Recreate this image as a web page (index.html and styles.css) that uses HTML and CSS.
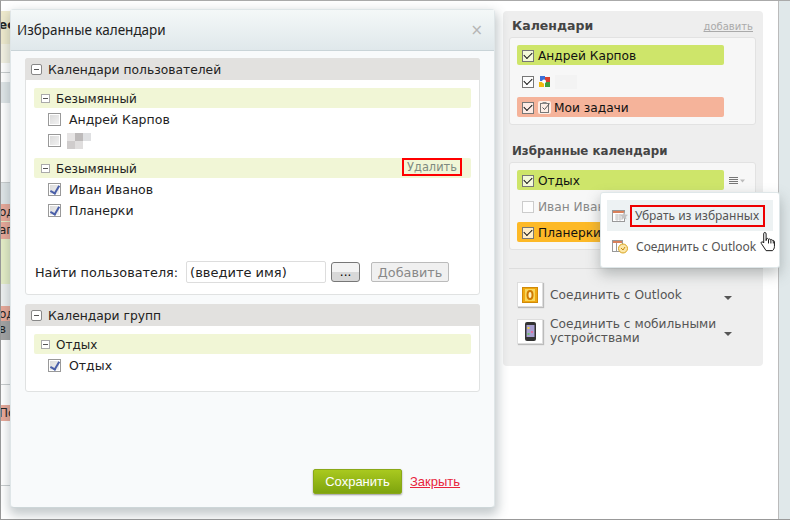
FILE: index.html
```html
<!DOCTYPE html>
<html lang="ru">
<head>
  <meta charset="UTF-8" />
  <title>Избранные календари</title>
  <link rel="stylesheet" href="styles.css">
</head>
<body>
<div class="screen">

  <!-- calendar grid behind the dialog, only its left edge is visible -->
  <div class="grid">
    <div class="strip h10"></div>
    <div class="strip cream h33"><b>ес</b></div>
    <div class="strip cream-light h19"></div>
    <div class="strip h10 line"></div>
    <div class="strip h9"></div>
    <div class="strip gray h21"></div>
    <div class="strip h80 line"></div>
    <div class="strip gray h21"></div>
    <div class="strip red h17">од</div>
    <div class="strip green h1"></div>
    <div class="strip red h17">ап</div>
    <div class="strip green h45"></div>
    <div class="strip gray-light h22"></div>
    <div class="strip red h15">од</div>
    <div class="strip dark h19">в с</div>
    <div class="strip h45 line"></div>
    <div class="strip h20"></div>
    <div class="strip red h16">По</div>
    <div class="strip h64 line"></div>
  </div>

  <aside class="side">
    <div class="side-head">
      <h3>Календари</h3>
      <a class="side-add">добавить</a>
    </div>
    <div class="side-box">
      <div class="cal cal-green"><span class="tick on"></span>Андрей Карпов</div>
      <div class="cal">
        <span class="tick on"></span>
        <svg class="gicon" width="12" height="12" viewBox="0 0 12 12">
          <rect x="1" y="0" width="5" height="5" fill="#3b6fd6"/>
          <rect x="6" y="1" width="5" height="5" fill="#d8402f"/>
          <rect x="0" y="6" width="5" height="5" fill="#f3b90f"/>
          <rect x="6" y="6" width="5" height="5" fill="#3f9e3d"/>
          <circle cx="5" cy="5.500" r="2" fill="#fff"/>
        </svg>
        <span class="blur-name"></span>
      </div>
      <div class="cal cal-pink">
        <span class="tick on"></span>
        <span class="task-ico">
          <svg width="13" height="13" viewBox="0 0 13 13" fill="none" stroke="#777">
            <rect x="2.500" y="2.500" width="8" height="9"/>
            <rect x="4.500" y="1" width="4" height="2" fill="#888" stroke="none"/>
            <path d="M4.500 6.500l2 2 5-6" stroke="#555"/>
          </svg>
        </span>Мои задачи
      </div>
    </div>

    <h3 class="side-title2">Избранные календари</h3>
    <div class="side-box">
      <div class="fav-row">
        <div class="cal cal-green"><span class="tick on"></span>Отдых</div>
        <span class="menu-ico">
          <svg width="17" height="7" viewBox="0 0 17 7">
            <path d="M0 .5h9M0 2.500h9M0 4.500h9M0 6.500h9" stroke="#777"/>
            <path d="M11 2.500h5l-2.500 3z" fill="#bbb"/>
          </svg>
        </span>
      </div>
      <div class="cal cal-off"><span class="tick"></span>Иван Иванов</div>
      <div class="cal cal-orange"><span class="tick on"></span>Планерки</div>
    </div>

    <div class="side-links">
      <div class="sync">
        <span class="sync-ico">
          <svg width="16" height="16" viewBox="0 0 16 16">
            <rect x=".5" y=".5" width="15" height="15" fill="#f0a810" stroke="#d08a08"/>
            <rect x="3" y="2" width="10" height="12" fill="#f8d65a"/>
            <ellipse cx="8" cy="8" rx="2.500" ry="4" fill="#fff3c0" stroke="#d07a00" stroke-width="2"/>
          </svg>
        </span>
        <span class="sync-text">Соединить с Outlook</span>
        <span class="arrow"></span>
      </div>
      <div class="sync">
        <span class="sync-ico">
          <svg width="11" height="19" viewBox="0 0 11 19">
            <rect x="0" y="0" width="11" height="19" rx="2" fill="#333"/>
            <rect x="1.500" y="3" width="8" height="12" fill="#a8a0d0"/>
            <rect x="2.500" y="5" width="2" height="2" fill="#f0d040"/>
            <rect x="6" y="9" width="2" height="2" fill="#e070a0"/>
            <rect x="2.500" y="11" width="2" height="2" fill="#70c070"/>
          </svg>
        </span>
        <span class="sync-text">Соединить с мобильными устройствами</span>
        <span class="arrow"></span>
      </div>
    </div>
  </aside>

  <div class="rail"></div>

  <!-- dialog -->
  <section class="dialog">
    <header class="dialog-head">
      <h2>Избранные календари</h2>
      <span class="close">×</span>
    </header>
    <div class="dialog-body">

      <div class="panel panel-users">
        <div class="panel-head"><span class="toggle big"></span>Календари пользователей</div>
        <div class="panel-body">
          <div class="group"><span class="toggle"></span>Безымянный</div>
          <div class="item"><span class="check"></span>Андрей Карпов</div>
          <div class="item">
            <span class="check"></span>
            <svg class="pixels" width="24" height="16" viewBox="0 0 24 16">
              <rect x="0" y="0" width="8" height="8" fill="#e6e4e4"/>
              <rect x="8" y="0" width="8" height="8" fill="#bdbaba"/>
              <rect x="16" y="0" width="8" height="8" fill="#dfe0e2"/>
              <rect x="0" y="8" width="8" height="8" fill="#cfcccc"/>
              <rect x="8" y="8" width="8" height="8" fill="#e0dede"/>
            </svg>
          </div>
          <div class="group group-next"><span class="toggle"></span>Безымянный<a class="remove">Удалить</a></div>
          <div class="item"><span class="check checked"></span>Иван Иванов</div>
          <div class="item"><span class="check checked"></span>Планерки</div>
          <div class="find">
            <label>Найти пользователя:</label>
            <input class="find-input" type="text" value="(введите имя)">
            <button class="btn-dots">...</button>
            <button class="btn-add">Добавить</button>
          </div>
        </div>
      </div>

      <div class="panel panel-groups">
        <div class="panel-head"><span class="toggle big"></span>Календари групп</div>
        <div class="panel-body">
          <div class="group"><span class="toggle"></span>Отдых</div>
          <div class="item"><span class="check checked"></span>Отдых</div>
        </div>
      </div>

      <div class="dialog-foot">
        <button class="btn-save">Сохранить</button>
        <a class="close-link">Закрыть</a>
      </div>
    </div>
  </section>

  <!-- popup menu -->
  <div class="popup">
    <div class="popup-item active">
      <svg width="16" height="14" viewBox="0 0 16 14">
        <rect x=".5" y="1.500" width="12" height="11" fill="#fff" stroke="#999"/>
        <rect x="1" y="2" width="11" height="2" fill="#d9805a"/>
        <path d="M3 6h8M3 8h8M3 10h8M5 5v7M8 5v7" stroke="#ccc"/>
        <path d="M12 3l1.200 2.500 2.800.3-2 2 .5 2.700-2.500-1.300-2.500 1.300.5-2.700-2-2 2.800-.3z" fill="#c4c4c4"/>
      </svg>
      <span class="popup-label">Убрать из избранных</span>
    </div>
    <div class="popup-item">
      <svg width="16" height="15" viewBox="0 0 16 15">
        <rect x=".5" y="1.500" width="10" height="11" fill="#fff" stroke="#999"/>
        <rect x="1" y="2" width="9" height="2" fill="#d9805a"/>
        <path d="M4.500 4v8" stroke="#999"/>
        <circle cx="11" cy="9.500" r="4.500" fill="#fbe6a8" stroke="#d9a520"/>
        <path d="M9 9l2 2 2-3" fill="none" stroke="#c58a10"/>
      </svg>
      <span>Соединить с Outlook</span>
    </div>
    <svg class="hand" width="19" height="23" viewBox="0 0 18 24">
      <path d="M5 1.500c1 0 1.500.6 1.500 1.500v7l.5-2c1-.6 2 0 2 .8.600-.8 2-.6 2.200.4.800-.6 2-.2 2.200.8.800-.3 1.800 0 1.800 1.200v5c0 2-1 3.300-2 4.300H6.500L1.500 13c-.8-1 .5-2.300 1.600-1.500l.9 1V3c0-1 .4-1.500 1-1.500z" fill="#fff" stroke="#111"/>
      <path d="M9 9v4M11.500 9.500V13M14 10.500V13" stroke="#111" fill="none"/>
    </svg>
  </div>

</div>
</body>
</html>
```

FILE: styles.css
```css
* { box-sizing: border-box; }
html, body { margin: 0; padding: 0; }
body {
  width: 790px;
  height: 520px;
  overflow: hidden;
  background: #fff;
  font-family: "DejaVu Sans", sans-serif;
  font-size: 12px;
  color: #222;
}
.screen {
  position: relative;
  display: flex;
  height: 520px;
  border-top: 1px solid #aaa;
  border-left: 1px solid #999;
  border-bottom: 1px solid #999;
}
h2, h3 { margin: 0; font-weight: normal; }
a { cursor: pointer; }

/* background calendar, does not go past the dialog */
.grid { width: 502px; flex: none; overflow: hidden; }
.strip { width: 200px; font-size: 12px; line-height: 16px; text-indent: -2px; overflow: hidden; white-space: nowrap; }
.line { border-bottom: 1px solid #c9cdce; }
.cream { background: #efeacd; padding-top: 6px; }
.cream-light { background: #f3f1e2; }
.gray { background: #dfe5e7; }
.gray-light { background: #edf0f0; }
.green { background: #e4edc6; }
.red { background: #e8a898; }
.dark { background: #a3a3a3; }
.h1 { height: 1px; }
.h9 { height: 9px; }
.h10 { height: 10px; }
.h15 { height: 15px; }
.h16 { height: 16px; }
.h17 { height: 17px; }
.h19 { height: 19px; }
.h20 { height: 20px; }
.h21 { height: 21px; }
.h22 { height: 22px; }
.h33 { height: 33px; }
.h45 { height: 45px; }
.h64 { height: 65px; }
.h80 { height: 80px; }

/* sidebar */
.side {
  width: 260px;
  height: 355px;
  margin-top: 10px;
  padding: 7px 7px 0 6px;
  background: #eee;
  border-radius: 4px;
  flex: none;
}
.side h3 { font-size: 12.500px; font-weight: bold; color: #444; }
.side-head { display: flex; justify-content: space-between; align-items: baseline; padding: 0 3px; height: 15px; }
.side-add { font-size: 10px; color: #aaa; text-decoration: underline; }
.side-box {
  margin-top: 4px;
  margin-bottom: 18px;
  height: 88px;
  padding: 7px;
  background: #f7f7f7;
  border: 1px solid #e2e2e2;
  border-radius: 3px;
}
.side h3.side-title2 { padding-left: 3px; height: 15px; line-height: 17px; font-size: 11.800px; }
.cal {
  display: flex;
  align-items: center;
  width: 207px;
  height: 20px;
  margin-bottom: 6px;
  padding: 1px 0 0 5px;
  border-radius: 2px;
  font-size: 12.200px;
  color: #111;
}
.cal-green { background: #cee56a; }
.cal-pink { background: #f5b39a; }
.cal-orange { background: #fdb927; }
.cal-off { color: #888; }
.tick {
  position: relative;
  width: 12px;
  height: 12px;
  margin-right: 4px;
  background: rgba(255, 255, 255, .75);
  border: 1px solid #ccc;
  flex: none;
}
.tick.on { border-color: #777; }
.tick.on::after {
  content: "";
  position: absolute;
  left: 1px;
  top: 1px;
  width: 7px;
  height: 4px;
  border-left: 1.500px solid #111;
  border-bottom: 1.500px solid #111;
  transform: rotate(-45deg);
}
.gicon { margin-left: 1px; }
.blur-name { width: 22px; height: 14px; margin-left: 4px; background: #f3f3f3; }
.task-ico { width: 13px; height: 13px; margin-right: 3px; background: #fdeee6; border-radius: 2px; display: flex; }
.fav-row { display: flex; align-items: flex-start; }
.menu-ico { margin: 7px 0 0 5px; display: flex; }

.side-links { border-top: 1px solid #ddd; margin-right: -7px; padding: 13px 8px 0; }
.sync { display: flex; align-items: center; margin-bottom: 10px; font-size: 12.200px; line-height: 14px; color: #555; }
.sync-ico {
  display: flex;
  align-items: center;
  justify-content: center;
  width: 26px;
  height: 25px;
  margin-right: 7px;
  background: #fff;
  border: 1px solid #ddd;
  box-shadow: 1px 1px 1px #bbb;
  flex: none;
}
.sync-text { width: 174px; }
.arrow {
  margin-top: 6px;
  width: 0;
  height: 0;
  border-left: 4px solid transparent;
  border-right: 4px solid transparent;
  border-top: 4px solid #555;
}

.rail { flex: 1; margin-left: 15px; background: #e0e8ea; border-left: 1px solid #bbb; }

/* dialog */
.dialog {
  position: absolute;
  left: 9px;
  top: 8px;
  width: 485px;
  height: 499px;
  background: #f8fafb;
  border: 1px solid #dfe6e8;
  border-bottom-color: #cdd6d8;
  border-radius: 4px;
  box-shadow: 1px 5px 11px 2px rgba(60, 80, 85, .3);
}
.dialog-head {
  display: flex;
  align-items: center;
  justify-content: space-between;
  height: 41px;
  padding: 0 11px 0 6px;
  background: linear-gradient(#f4f8f8, #e0e8eb);
  border-bottom: 1px solid #c9d4d8;
}
.dialog-head h2 { font: 13.500px "Noto Sans", sans-serif; color: #222; }
.close { color: #b5b5b5; font-size: 15px; }
.dialog-body { padding: 7px 14px 0; }
.panel { background: #fff; border: 1px solid #e0e2e2; border-radius: 3px; width: 455px; }
.panel-users { height: 237px; }
.panel-groups { height: 88px; margin-top: 9px; }
.panel-head {
  display: flex;
  align-items: center;
  height: 22px;
  padding: 1px 0 0 6px;
  background: #e2e1df;
  font-size: 12.300px;
  color: #222;
  margin: -1px -1px 0;
  border-radius: 3px 3px 0 0;
}
.panel-body { padding: 8px 8px 0; }
.toggle {
  position: relative;
  width: 9px;
  height: 9px;
  margin: 0 6px 0 3px;
  background: #fff;
  border: 1px solid #aaa;
  flex: none;
}
.toggle::after {
  content: "";
  position: absolute;
  left: 1px;
  top: 3px;
  width: 5px;
  height: 1px;
  background: #555;
}
.toggle.big { width: 11px; height: 11px; margin: 0 6px 0 0; border-color: #888; border-radius: 2px; }
.toggle.big::after { left: 2px; top: 4px; }
.group {
  display: flex;
  align-items: center;
  height: 20px;
  margin-bottom: 1px;
  padding: 1px 0 0 4px;
  background: #f1f6d6;
  border-radius: 2px;
  font-size: 12px;
}
.group-next { margin-top: 7px; }
.remove {
  align-self: flex-start;
  margin-top: -1px;
  margin-left: auto;
  margin-right: 9px;
  width: 60px;
  height: 18px;
  line-height: 15px;
  text-align: center;
  border: 2px solid #f00;
  font-size: 11.400px;
  color: #7f8a80;
}
.item { display: flex; align-items: center; height: 21px; padding-left: 14px; font-size: 12.500px; }
.check {
  position: relative;
  width: 13px;
  height: 13px;
  margin-right: 8px;
  background: linear-gradient(135deg, #d8d8d8, #f4f4f4);
  border: 1px solid #999;
  box-shadow: inset 0 0 0 1px #fff;
  flex: none;
}
.check.checked::after {
  content: "";
  position: absolute;
  left: 3px;
  top: 0;
  width: 4px;
  height: 8px;
  border-right: 2px solid #4a5fa8;
  border-bottom: 2px solid #4a5fa8;
  transform: rotate(30deg);
}
.pixels { margin-left: -2px; }
.find { display: flex; align-items: center; margin-top: 40px; padding-left: 1px; }
.find label { font-size: 12.800px; margin-right: 8px; }
.find-input {
  width: 140px;
  height: 22px;
  padding: 0 3px;
  border: 1px solid #ddd;
  border-radius: 2px;
  font: 13px "DejaVu Sans", sans-serif;
  color: #222;
}
.btn-dots {
  width: 29px;
  height: 20px;
  margin-left: 5px;
  padding: 0;
  background: linear-gradient(#f3f3f3 50%, #d8d8d8 50%);
  border: 1px solid #777;
  border-radius: 3px;
  font: 12px "DejaVu Sans", sans-serif;
}
.btn-add {
  width: 78px;
  height: 20px;
  margin-left: 11px;
  padding: 0;
  background: #f0f0f0;
  border: 1px solid #bbb;
  border-radius: 2px;
  font: 12.800px "DejaVu Sans", sans-serif;
  color: #888;
}
.dialog-foot { display: flex; align-items: center; margin-top: 77px; padding-left: 288px; }
.btn-save {
  width: 89px;
  height: 25px;
  padding: 0;
  background: linear-gradient(#a9c91f, #7ea40e);
  border: 1px solid #8aa818;
  border-radius: 2px;
  box-shadow: 0 1px 2px #999;
  font: 13px "Liberation Sans", sans-serif;
  color: #fff;
}
.close-link { margin-left: 8px; font: 13px "Liberation Sans", sans-serif; color: #e8243c; text-decoration: underline; }

/* popup */
.popup {
  position: absolute;
  left: 599px;
  top: 191px;
  width: 180px;
  height: 76px;
  padding: 7px 6px 0;
  background: #fff;
  border: 1px solid #dfe7e9;
  border-radius: 3px;
  box-shadow: 0 6px 14px rgba(90, 100, 100, .4);
}
.popup-item {
  display: flex;
  align-items: center;
  gap: 8px;
  height: 31px;
  padding-left: 5px;
  font: 12px "Noto Sans", sans-serif;
  color: #555;
  white-space: nowrap;
}
.popup-item.active { gap: 2px; background: #edf2f3; }
.popup-label { width: 135px; height: 22px; line-height: 18px; padding: 0 3px; border: 2px solid #e00; }
.hand { position: absolute; left: 158px; top: 38px; }
```
